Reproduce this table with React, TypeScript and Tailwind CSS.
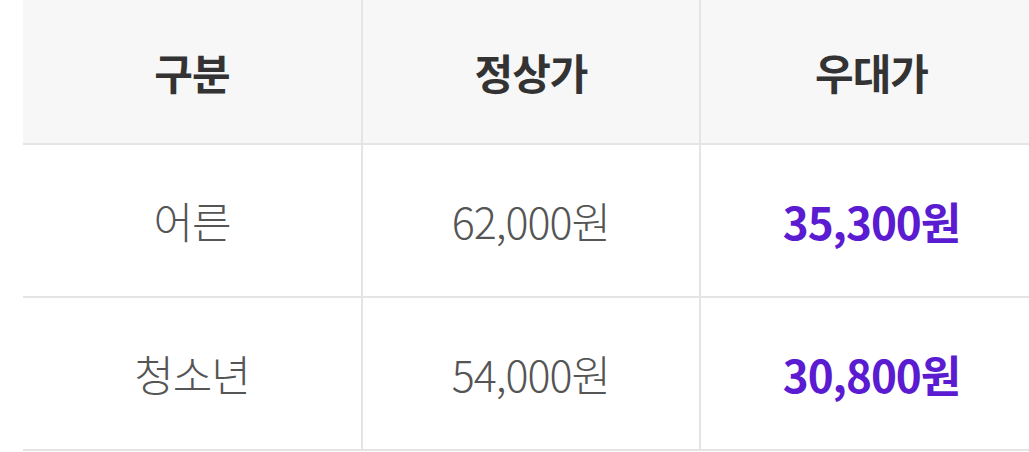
const rows = [
  { label: '어른', normal: '62,000원', special: '35,300원' },
  { label: '청소년', normal: '54,000원', special: '30,800원' },
]

export default function App() {
  return (
    <div
      className="w-[1029px] h-[452px] overflow-hidden bg-white pl-[23px]"
      style={{ fontFamily: '"Noto Sans CJK KR", "Noto Sans", sans-serif' }}
    >
      <table className="w-[1019px] border-collapse table-fixed">
        <colgroup>
          <col className="w-[339px]" />
          <col className="w-[338px]" />
          <col className="w-[342px]" />
        </colgroup>
        <thead>
          <tr className="bg-[#f7f7f7] h-[144px]">
            <th className="border-r-2 border-b-2 border-[#e4e4e4] text-[42px] font-bold text-[#333] tracking-[-1px]">구분</th>
            <th className="border-x-2 border-b-2 border-[#e4e4e4] text-[42px] font-bold text-[#333] tracking-[-1px]">정상가</th>
            <th className="border-l-2 border-b-2 border-[#e4e4e4] text-[42px] font-bold text-[#333] tracking-[-1px]">우대가</th>
          </tr>
        </thead>
        <tbody>
          {rows.map((r) => (
            <tr key={r.label} className="h-[153px]">
              <td className="border-r-2 border-b-2 border-[#e4e4e4] text-center text-[43px] font-light text-[#555] tracking-[-1px]">{r.label}</td>
              <td className="border-x-2 border-b-2 border-[#e4e4e4] text-center text-[43px] font-light text-[#555] tracking-[-1px]">{r.normal}</td>
              <td className="border-l-2 border-b-2 border-[#e4e4e4] text-center text-[44px] font-bold text-[#5a1bd1] tracking-[-1px]">{r.special}</td>
            </tr>
          ))}
        </tbody>
      </table>
    </div>
  )
}
